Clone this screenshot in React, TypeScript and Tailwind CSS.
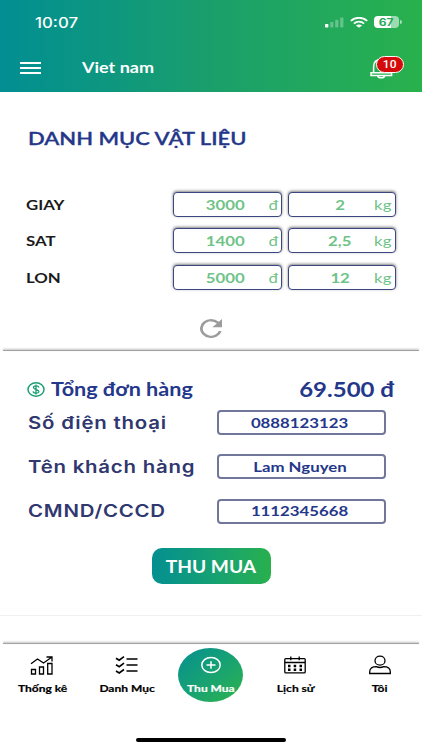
import type { ReactNode } from 'react'
import clsx from 'clsx'

const materials = [
  { name: 'GIAY', price: '3000', amount: '2' },
  { name: 'SAT', price: '1400', amount: '2,5' },
  { name: 'LON', price: '5000', amount: '12' },
]

const customer = [
  { label: 'Số điện thoại', value: '0888123123' },
  { label: 'Tên khách hàng', value: 'Lam Nguyen' },
  { label: 'CMND/CCCD', value: '1112345668' },
]

// Wide lettering used all over the app
function Wide({ children, className }: { children: ReactNode; className?: string }) {
  return (
    <span className={clsx('inline-block whitespace-nowrap scale-x-[1.2]', className)}>{children}</span>
  )
}

function StatusBar() {
  return (
    <div className="flex h-[44px] items-center pl-[35px] pr-[20px] font-['Inter']">
      <Wide className="origin-left text-[14px] font-medium">10:07</Wide>
      <div className="ml-auto flex items-center">
        <svg className="mr-[6px] h-[11px] w-[19px]" viewBox="0 0 19 11" fill="#fff">
          <rect x="0" y="7" width="3.4" height="3.5" rx=".8" />
          <rect x="5.2" y="5" width="3.2" height="5.5" rx=".8" opacity=".3" />
          <rect x="10.2" y="2.8" width="3.2" height="7.7" rx=".8" opacity=".3" />
          <rect x="15.2" y=".5" width="3.2" height="10" rx=".8" opacity=".3" />
        </svg>
        <svg className="mr-[6px] h-[11px] w-[18px]" viewBox="0 0 18 11" fill="none" stroke="#fff" strokeWidth="1.9">
          <path d="M.8 3.9C5.2-.2 12.8-.2 17.2 3.9" />
          <path d="M3.9 6.6C6.8 4 11.2 4 14.1 6.6" />
          <path d="M9 10.8 5.9 8.5C7.6 7 10.4 7 12.1 8.5Z" fill="#fff" stroke="none" />
        </svg>
        <div className="flex h-[12px] w-[25px] items-center justify-center rounded-[4px] bg-linear-to-r from-white from-67% to-white/55 to-67% text-[10px] font-bold text-[#27a95a]">
          <Wide className="leading-none">67</Wide>
        </div>
        <span className="ml-px h-[4px] w-[2px] rounded-r bg-white/60" />
      </div>
    </div>
  )
}

function Header() {
  return (
    <header className="h-[92px] bg-linear-to-r from-[#028e92] via-[#1a9f6b] to-[#29b14c] text-white">
      <StatusBar />
      <div className="flex h-[47px] items-center pl-[20px] pr-[17px]">
        <div className="flex w-[21px] flex-col gap-[3px]">
          <span className="h-[2px] bg-white" />
          <span className="h-[2px] bg-white" />
          <span className="h-[2px] bg-white" />
        </div>
        <Wide className="ml-[41px] origin-left text-[15px] font-bold">Viet nam</Wide>
        <div className="relative ml-auto h-[22px] w-[35px]">
          <svg className="h-full w-[24px]" viewBox="0 0 24 22" fill="none" stroke="#fff" strokeWidth="1.5">
            <path d="M3.6 15.5V10C3.6 5.4 6.3 2.6 11 2.6S19.5 5.4 19.5 10v5.5M1 15.7h20.6v2.7H1zM7.6 18.6c.6 3 6.6 3 7.2 0" />
          </svg>
          <span className="absolute -top-px left-[6px] flex h-[17px] w-[28px] items-center justify-center rounded-full border border-white bg-[#d50b0b] pt-px font-['Roboto'] text-[10px] font-medium">
            <Wide>10</Wide>
          </span>
        </div>
      </div>
    </header>
  )
}

function AmountBox({ value, unit, unitClass }: { value: string; unit: string; unitClass: string }) {
  return (
    <div className="relative flex h-[25px] w-[108.5px] items-center justify-center rounded-[4px] border border-[#3c4683] bg-white pr-[4px] text-[14px] text-[#6fc388] shadow-[0_-1px_3px_rgba(0,0,0,0.5)]">
      <Wide className="font-bold">{value}</Wide>
      <span className={clsx('absolute', unitClass)}>
        <Wide className="origin-right">{unit}</Wide>
      </span>
    </div>
  )
}

function Materials() {
  return (
    <section className="flex h-[259px] flex-col pt-[31px]">
      <h1 className="ml-[28px] h-[30px] text-[18px] leading-[30px] font-semibold text-[#24378a] [-webkit-text-stroke:0.3px]">
        <Wide className="origin-left scale-x-[1.22]">DANH MỤC VẬT LIỆU</Wide>
      </h1>
      <div className="mt-[39px] flex flex-col gap-[11.4px] pl-[26px] pr-[26px]">
        {materials.map((m) => (
          <div key={m.name} className="flex h-[25px] items-center">
            <Wide className="origin-left text-[14px] font-bold text-[#1b1b1b]">{m.name}</Wide>
            <div className="ml-auto flex gap-[6px]">
              <AmountBox value={m.price} unit="đ" unitClass="right-[3px]" />
              <AmountBox value={m.amount} unit="kg" unitClass="right-[4px]" />
            </div>
          </div>
        ))}
      </div>
      <svg className="mt-[29px] h-[19px] w-[22px] self-center" viewBox="4 4 16 16" preserveAspectRatio="none" fill="#9c9c9c">
        <path d="M17.65 6.35A7.96 7.96 0 0 0 12 4a8 8 0 1 0 7.73 10h-2.08A6 6 0 1 1 12 6c1.66 0 3.14.69 4.22 1.78L13 11h7V4z" />
      </svg>
    </section>
  )
}

function Order() {
  return (
    <section className="h-[293px] px-[28px] pt-[24px] text-[#24378a]">
      <div className="flex h-[28px] items-center">
        <svg className="-ml-px h-[15px] w-[18px]" viewBox="0 0 18 15" fill="none" stroke="#1b9f70">
          <ellipse cx="9" cy="7.5" rx="8" ry="6.7" strokeWidth="1.5" />
          <path d="M11.8 5.5C11.5 3.3 6.5 3.3 6.5 5.6S11.9 7.2 11.9 9.5 6.4 11.7 6.1 9.3M9 2.5v10" strokeWidth="1.3" />
        </svg>
        <Wide className="mt-px ml-[6px] origin-left text-[18px] font-bold">Tổng đơn hàng</Wide>
        <Wide className="ml-auto origin-right text-[20px] font-bold">69.500 đ</Wide>
      </div>
      <div className="mt-[7px] flex flex-col gap-[19.3px] pr-[8.5px]">
        {customer.map((c) => (
          <div key={c.label} className="flex h-[25px] items-center justify-between">
            <Wide className="mt-[2px] origin-left font-['Inter'] text-[17px] font-semibold tracking-[0.65px] text-[#30386f]">
              {c.label}
            </Wide>
            <div className="flex h-[25px] w-[169px] items-center justify-center rounded-[4px] border-2 border-[#4d5482]/80 pr-[3px] pb-px text-[14px] font-bold">
              <Wide>{c.value}</Wide>
            </div>
          </div>
        ))}
      </div>
      <button className="mx-auto mt-[24px] flex h-[36px] w-[119px] items-center justify-center rounded-[10px] bg-linear-to-r from-[#058f90] to-[#28b04c] pt-[3px] text-[16.5px] font-bold text-white">
        <Wide className="scale-x-[1.16]">THU MUA</Wide>
      </button>
      <hr className="-mx-[28px] mt-[31px] border-[#f0f0f0]" />
    </section>
  )
}

function NavItem({ label, children, active }: { label: string; children: ReactNode; active?: boolean }) {
  return (
    <div className="flex w-[84.4px] justify-center">
      <div
        className={clsx(
          'flex h-[54px] w-[65px] flex-col items-center pt-[7px]',
          active ? 'rounded-[50%] bg-linear-to-br from-[#058f90] to-[#2cb348] text-white' : 'text-black',
        )}
      >
        <svg className="h-[20px] w-[24px] shrink-0" viewBox="0 0 24 20" fill="none" stroke="currentColor" strokeWidth="1.3">
          {children}
        </svg>
        <Wide className="mt-[5px] text-[10px] leading-[16px] font-bold [-webkit-text-stroke:0.2px]">{label}</Wide>
      </div>
    </div>
  )
}

function BottomNav() {
  return (
    <nav className="flex h-[106px] flex-col bg-white">
      <div className="flex pt-[4px]">
        <NavItem label="Thống kê">
          <path d="M1.5 14.5h4V19h-4zM9.5 12h4v7h-4zM17.7 8.500h4.300V19h-4.300zM1 8.800 7.500 4l6 4L22 2M16.500 2H22v4.500" />
        </NavItem>
        <NavItem label="Danh Mục">
          <path d="M1 3.2 4.2 5.2 9 1.7M1 9.7 4.2 11.7 9 8.2M1 16 4.2 18 9 14.5M11.5 4h11M11.5 10h11M11.5 16h11" strokeWidth="1.6" />
        </NavItem>
        <NavItem label="Thu Mua" active>
          <ellipse cx="12" cy="10" rx="9.2" ry="7.5" strokeWidth="1.5" />
          <path d="M7.5 10h9M12 6.3v7.4" strokeWidth="1.5" />
        </NavItem>
        <NavItem label="Lịch sử">
          <rect x="1.8" y="3.6" width="20.4" height="14.3" rx="1" />
          <path d="M1.8 7.5h20.4M7.8 1.5v3.8M16.2 1.5v3.8" />
          <path d="M5 11h2.5M10.7 11h2.5M16.5 11H19M5 14.7h2.5M10.7 14.7h2.5M16.5 14.7H19" strokeWidth="2.4" />
        </NavItem>
        <NavItem label="Tôi">
          <ellipse cx="12" cy="5.7" rx="5" ry="4.5" />
          <path d="M1.7 18.5v-1.7c0-3.5 2.8-5.2 6.7-5.2 2.4 1.2 4.8 1.2 7.2 0 3.9 0 6.7 1.7 6.7 5.2v1.7z" />
        </NavItem>
      </div>
      <div className="mx-auto mt-auto mb-[8px] h-[4px] w-[150px] rounded-full bg-black" />
    </nav>
  )
}

// Soft line cast upwards by a raised panel
function PanelEdge() {
  return <div className="relative z-10 mx-[3px] -mt-px h-px bg-[#a3a3a3] shadow-[0_-1px_2px_rgba(0,0,0,0.35)]" />
}

export default function App() {
  return (
    <div className="h-[750px] w-[422px] overflow-hidden bg-white font-['Lato','Noto_Sans',sans-serif]">
      <Header />
      <Materials />
      <PanelEdge />
      <Order />
      <PanelEdge />
      <BottomNav />
    </div>
  )
}
